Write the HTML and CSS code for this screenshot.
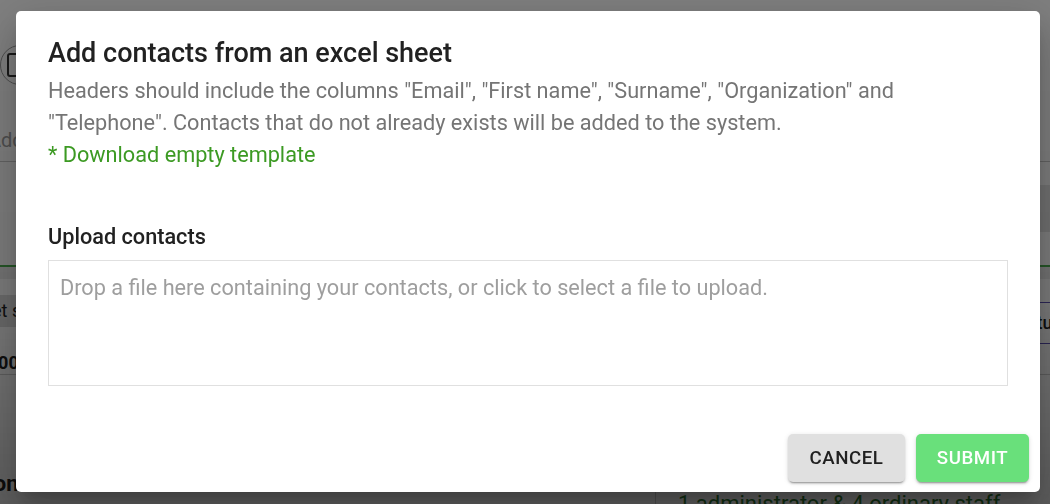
FILE: index.html
```html
<!DOCTYPE html>
<html>
<head>
  <meta name="viewport" content="width=device-width" />
  <link rel="stylesheet" href="styles.css">
  <title>Contacts</title>
</head>
<body>
  <div class="page">
    <div class="toolbar">
      <span class="tool-btn"><span class="tool-icon"></span></span>
    </div>
    <div class="search-row">
      <span class="search-input">Add contact</span>
    </div>
    <div class="action-row">
      <span class="action-btn">ADD</span>
    </div>
    <div class="tabs-row"></div>
    <div class="table-head">
      <span class="head-left">Street st</span>
      <span class="head-right">Status</span>
    </div>
    <div class="table-row">
      <span class="cell-left">-00</span>
    </div>
    <div class="section-row">
      <span class="section-title">ion</span>
    </div>
    <div class="footer-row">
      <span class="footer-text">1 administrator &amp; 4 ordinary staff</span>
    </div>
  </div>

  <div class="backdrop"></div>

  <div class="dialog">
    <h2 class="dialog-title">Add contacts from an excel sheet</h2>
    <p class="dialog-text">Headers should include the columns "Email", "First name", "Surname", "Organization" and "Telephone". Contacts that do not already exists will be added to the system.</p>
    <a class="template-link" href="#">* Download empty template</a>

    <div class="upload-label">Upload contacts</div>
    <div class="dropzone">Drop a file here containing your contacts, or click to select a file to upload.</div>

    <div class="dialog-actions">
      <button class="btn btn-cancel" type="button">Cancel</button>
      <button class="btn btn-submit" type="button">Submit</button>
    </div>
  </div>
</body>
</html>
```

FILE: styles.css
```css
html, body {
  margin: 0;
  height: 100%;
}
body {
  background: #ffffff;
  font-family: Roboto, "Liberation Sans", sans-serif;
  color: #212121;
  overflow: hidden;
}

/* page behind the dialog */
.page {
  height: 504px;
  overflow: hidden;
}
.toolbar {
  height: 40px;
  padding-top: 45px;
}
.tool-btn {
  display: inline-flex;
  align-items: center;
  box-sizing: border-box;
  height: 40px;
  width: 120px;
  border: 1px solid #9e9e9e;
  border-radius: 20px;
  padding-left: 6px;
}
.tool-icon {
  width: 10px;
  height: 20px;
  border: 2px solid #333;
  border-radius: 3px;
}
.search-row {
  display: flex;
  margin-top: 35px;
  height: 41px;
  border-bottom: 1px solid #c8c8c8;
}
.search-input {
  font-size: 20px;
  color: #9e9e9e;
  line-height: 40px;
  margin-left: -12px;
}
.action-row {
  display: flex;
  justify-content: flex-end;
  height: 103px;
  padding-top: 23px;
  box-sizing: border-box;
}
.action-btn {
  height: 47px;
  width: 120px;
  background: #e6e6e6;
  color: #666;
  font-size: 18px;
  font-weight: 500;
  line-height: 47px;
  padding-left: 4px;
  box-sizing: border-box;
}
.tabs-row {
  border-top: 2px solid #4caf50;
  height: 12px;
  background: #ececec;
}
.table-head {
  display: flex;
  align-items: flex-start;
  justify-content: space-between;
  margin-top: 16px;
  height: 32px;
  font-size: 18px;
}
.head-left {
  background: #dcdcdc;
  width: 655px;
  line-height: 32px;
  height: 32px;
  margin-left: -40px;
}
.head-right {
  width: 200px;
  margin-top: 7px;
  border-top: 1px solid #5b4fb3;
  border-bottom: 1px solid #5b4fb3;
  line-height: 40px;
  font-weight: 500;
  text-indent: 160px;
  overflow: hidden;
  white-space: nowrap;
}
.table-row {
  height: 48px;
  border-bottom: 1px solid #d0d0d0;
  font-size: 18px;
  font-weight: 700;
  line-height: 24px;
  padding-top: 24px;
  box-sizing: border-box;
}
.cell-left {
  margin-left: -9px;
}
.section-row {
  margin-top: 92px;
  font-size: 22px;
  font-weight: 700;
  height: 24px;
  line-height: 34px;
}
.section-title {
  margin-left: -12px;
}
.footer-row {
  display: flex;
  height: 40px;
}
.footer-text {
  margin-left: 655px;
  padding-left: 22px;
  border-left: 1px solid #cfcfcf;
  color: #2e7d32;
  font-size: 22px;
  line-height: 26px;
}

/* dialog */
.backdrop {
  position: fixed;
  inset: 0;
  background: linear-gradient(to bottom, rgba(0, 0, 0, 0.5), rgba(0, 0, 0, 0.52) 60%, rgba(0, 0, 0, 0.64));
}
.dialog {
  position: fixed;
  left: 16px;
  top: 11px;
  width: 1024px;
  height: 481px;
  box-sizing: border-box;
  padding: 26px 11px 10px 32px;
  background: #ffffff;
  border-radius: 5px;
  box-shadow: 0 11px 15px -7px rgba(0,0,0,0.2), 0 24px 38px 3px rgba(0,0,0,0.14), 0 9px 46px 8px rgba(0,0,0,0.12);
  display: flex;
  flex-direction: column;
}
.dialog-title {
  margin: 0 0 6px 0;
  font-size: 27px;
  font-weight: 500;
  line-height: 32px;
  color: #212121;
}
.dialog-text {
  margin: 0;
  padding-right: 21px;
  font-size: 21.7px;
  line-height: 32px;
  color: #757575;
}
.template-link {
  font-size: 21.7px;
  line-height: 32px;
  color: #3c9a23;
  text-decoration: none;
  align-self: flex-start;
}
.upload-label {
  margin-top: 50px;
  font-size: 21.7px;
  font-weight: 500;
  line-height: 32px;
  color: #212121;
}
.dropzone {
  margin: 7px 21px 0 0;
  height: 126px;
  box-sizing: border-box;
  padding: 11px 11px;
  border: 1px solid #e0e0e0;
  font-size: 21.7px;
  line-height: 32px;
  color: #9e9e9e;
}
.dialog-actions {
  margin-top: auto;
  display: flex;
  justify-content: flex-end;
  gap: 11px;
}
.btn {
  height: 48px;
  border: none;
  border-radius: 5px;
  font-family: Roboto, "Liberation Sans", sans-serif;
  font-size: 18.7px;
  font-weight: 500;
  letter-spacing: 0.03em;
  text-transform: uppercase;
  box-shadow: 0 3px 1px -2px rgba(0,0,0,0.2), 0 2px 2px 0 rgba(0,0,0,0.14), 0 1px 5px 0 rgba(0,0,0,0.12);
}
.btn-cancel {
  width: 117px;
  background: #e0e0e0;
  color: #212121;
}
.btn-submit {
  width: 113px;
  background: #69e07b;
  color: #ffffff;
}
```
